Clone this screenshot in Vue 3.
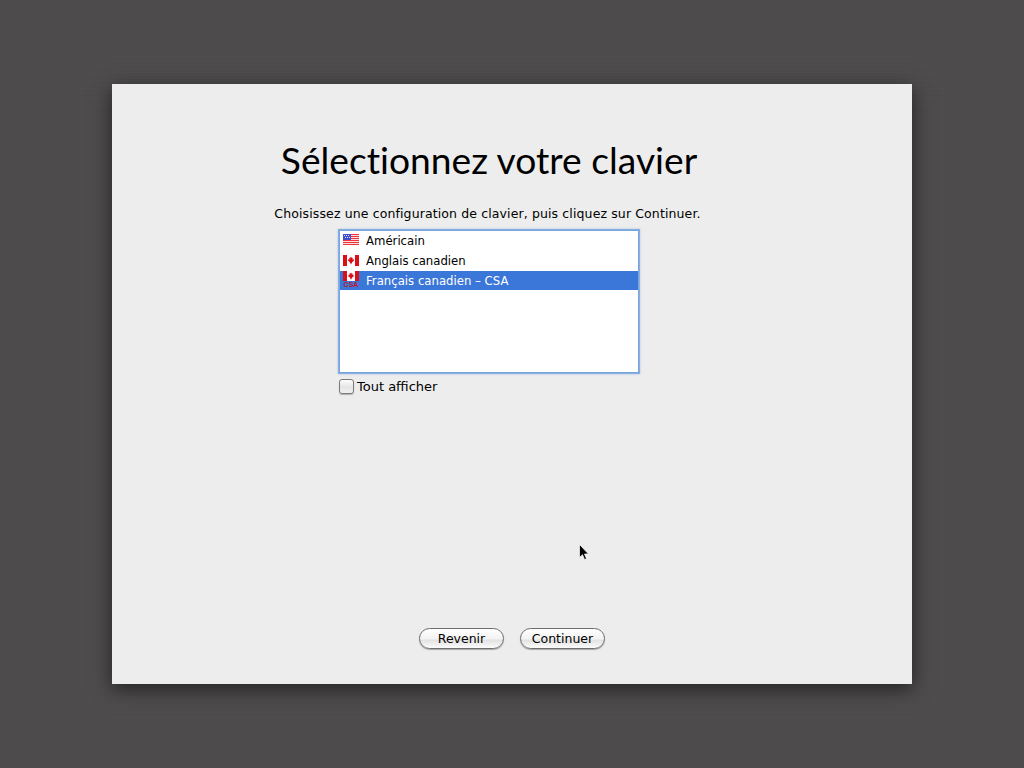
<script setup>
const layouts = [
  { name: 'Américain', flag: 'us' },
  { name: 'Anglais canadien', flag: 'ca' },
  { name: 'Français canadien – CSA', flag: 'csa', selected: true }
]
const stripes = [0, 2, 4, 6, 8, 10]
</script>

<template>
  <div class="desktop">
    <main class="panel">
      <div class="content">
        <h1 class="title">Sélectionnez votre clavier</h1>
        <p class="intro">Choisissez une configuration de clavier, puis cliquez sur Continuer.</p>
        <div class="column">
          <ul class="list">
            <li v-for="l in layouts" :key="l.name" class="row" :class="{ selected: l.selected }">
              <svg class="flag" width="18" height="19" viewBox="0 0 18 19">
                <template v-if="l.flag === 'us'">
                  <rect x="1" y="3" width="16" height="11" fill="#fbdcdc" />
                  <rect v-for="s in stripes" :key="s" x="1" :y="3 + s" width="16" height="1" fill="#f0323c" />
                  <rect x="1" y="3" width="8" height="6" fill="#3f4fc8" />
                  <path d="M2 4.500h1M4 4.500h1M6 4.500h1M3 6.500h1M5 6.500h1M7 6.500h1" stroke="#d8dcf4" stroke-width="1" />
                </template>
                <template v-else-if="l.flag === 'ca'">
                  <rect x="1" y="4" width="16" height="11" fill="#fff" />
                  <rect x="1" y="4" width="4" height="11" fill="#dc0f18" />
                  <rect x="13" y="4" width="4" height="11" fill="#dc0f18" />
                  <path d="M9 5.500l.9 1.400.9-.4-.3 2 1.200-.5-.2.900.8.500-2.300 1.900.2 1H9.300v1h-.6v-1H7.800l.2-1-2.300-1.900.8-.5-.2-.9 1.200.5-.3-2 .9.400z" fill="#dc0f18" />
                </template>
                <template v-else>
                  <rect x="1" y="0" width="16" height="10" fill="#fff" />
                  <rect x="1" y="0" width="4" height="10" fill="#dc0f18" />
                  <rect x="13" y="0" width="4" height="10" fill="#dc0f18" />
                  <path d="M9 1.500l.9 1.300.9-.4-.3 1.800 1.200-.4-.2.9.7.400L10 6.500l.2 1H9.300V8.500h-.6v-1H7.800l.2-1L5.800 5.100l.7-.4-.2-.9 1.200.4-.3-1.800.9.400z" fill="#dc0f18" />
                  <text x="9" y="16" text-anchor="middle" class="csa">CSA</text>
                </template>
              </svg>
              <span>{{ l.name }}</span>
            </li>
          </ul>
          <label class="show-all">
            <span class="checkbox"></span>
            <span>Tout afficher</span>
          </label>
        </div>
      </div>
      <div class="buttons">
        <button class="btn">Revenir</button>
        <button class="btn">Continuer</button>
      </div>
    </main>
    <svg class="cursor" width="12" height="18" viewBox="0 0 12 18">
      <path d="M.5.500v13l3-2.800 2 4.800 2-.8-2-4.700h4z" fill="#000" stroke="#fff" stroke-width=".7" />
    </svg>
  </div>
</template>

<style>
html, body { margin: 0; }
</style>

<style scoped>
.desktop {
  position: relative;
  width: 1024px;
  height: 768px;
  overflow: hidden;
  box-sizing: border-box;
  padding: 84px 112px;
  background-color: #4e4c4c;
  background-image: repeating-linear-gradient(0deg, #4c4a4a 0 1px, #4f4d4d 1px 2px);
  font-family: "DejaVu Sans", sans-serif;
  color: #000;
}
.panel {
  width: 800px;
  height: 600px;
  box-sizing: border-box;
  background: #ededed;
  box-shadow: 0 5px 18px rgba(0, 0, 0, 0.55);
  display: flex;
  flex-direction: column;
  justify-content: space-between;
  padding: 0 0 35px 0;
}
.content {
  display: flex;
  flex-direction: column;
  align-items: center;
  padding-right: 46px;
}
.title {
  margin: 51px 0 0;
  font-family: "Lato", sans-serif;
  font-weight: 400;
  font-size: 37.2px;
  font-variant-ligatures: none;
  line-height: 50px;
  white-space: nowrap;
}
.intro {
  margin: 21px 3px 0 0;
  font-size: 12.5px;
  line-height: 16px;
  letter-spacing: 0.12px;
  white-space: nowrap;
}
.column {
  width: 300px;
  margin-top: 8px;
}
.list {
  list-style: none;
  margin: 0;
  padding: 0;
  width: 300px;
  height: 143px;
  box-sizing: border-box;
  background: #fff;
  border: 1px solid #7aa6de;
  box-shadow: 0 0 0 1px #86aee0, 0 0 2px 1px rgba(120, 165, 225, 0.6);
  overflow: hidden;
}
.row {
  height: 20px;
  display: flex;
  align-items: flex-start;
  gap: 6px;
  padding-left: 2px;
  font-size: 11.7px;
  line-height: 21px;
  white-space: nowrap;
}
.row.selected {
  height: 19px;
  background: #3b76d9;
  color: #fff;
}
.flag {
  flex: none;
}
.csa {
  font-family: "Liberation Sans", sans-serif;
  font-size: 7px;
  font-weight: 700;
  fill: #c0182c;
}
.show-all {
  display: flex;
  align-items: center;
  gap: 3px;
  margin-top: 5px;
  height: 17px;
  font-size: 13px;
}
.checkbox {
  width: 13px;
  height: 13px;
  border: 1px solid #7a7a7a;
  border-radius: 3px;
  background: linear-gradient(#fdfdfd, #e4e4e4 55%, #f2f2f2);
  box-shadow: 0 1px 1px rgba(0, 0, 0, 0.25);
}
.buttons {
  display: flex;
  justify-content: center;
  gap: 16px;
}
.btn {
  width: 85px;
  height: 21px;
  box-sizing: border-box;
  padding: 0;
  border: 1px solid #6e6e6e;
  border-radius: 11px;
  background: linear-gradient(#ffffff, #f3f3f3 50%, #e3e3e3 60%, #fbfbfb);
  box-shadow: 0 1px 1px rgba(0, 0, 0, 0.3);
  font-family: "DejaVu Sans", sans-serif;
  font-size: 12.5px;
  line-height: 18px;
  color: #000;
}
.cursor {
  position: absolute;
  left: 579px;
  top: 544px;
}
</style>
